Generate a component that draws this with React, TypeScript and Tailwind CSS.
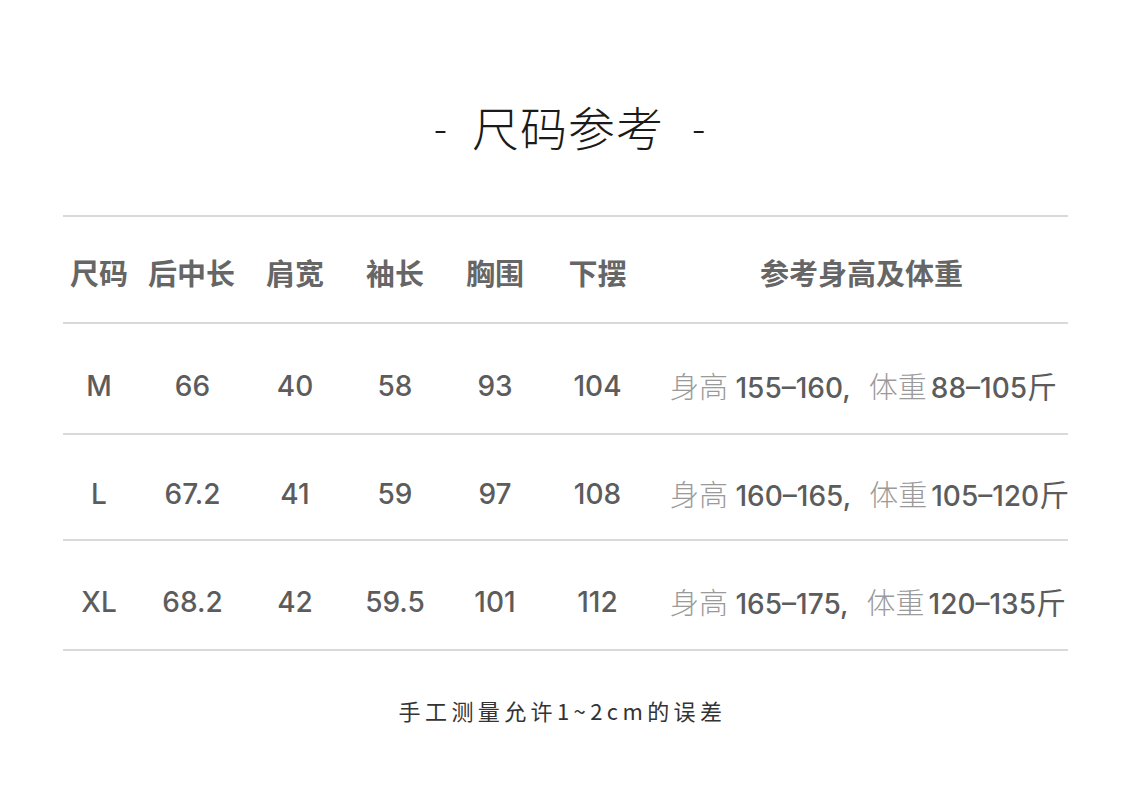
import React from "react";

const cjk = { fontFamily: '"Noto Sans CJK SC", sans-serif' };
const num = { fontFamily: 'Inter, "Noto Sans CJK SC", sans-serif' };

const rows = [
  { size: "M", len: "66", sh: "40", sl: "58", ch: "93", hem: "104", h: "155–160", w: "88–105", height: "h-[111px]" },
  { size: "L", len: "67.2", sh: "41", sl: "59", ch: "97", hem: "108", h: "160–165", w: "105–120", height: "h-[106px]" },
  { size: "XL", len: "68.2", sh: "42", sl: "59.5", ch: "101", hem: "112", h: "165–175", w: "120–135", height: "h-[110px]" },
];

const cols = "grid grid-cols-[72px_115px_90px_110px_90px_115px_413px] items-center";

export default function App() {
  return (
    <div className="w-[1125px] h-[789px] bg-white overflow-hidden">
      {/* title */}
      <div className="pt-[102px] pl-[14px] flex justify-center items-center text-[#1a1a1a] text-[47px] leading-none font-light" style={cjk}>
        <span className="mr-[25px] text-[40px]">-</span>
        <span className="tracking-[1px]">尺码参考</span>
        <span className="ml-[28px] text-[40px]">-</span>
      </div>

      <div className="ml-[63px] w-[1005px] mt-[66px] border-t-2 border-[#d9d9d9]">
        <div className={`${cols} h-[107px] pt-[6px] border-b-2 border-[#d9d9d9] text-[#666] text-[29px] font-bold text-center`} style={cjk}>
          <div>尺码</div>
          <div className="pr-[2px]">后中长</div>
          <div>肩宽</div>
          <div>袖长</div>
          <div>胸围</div>
          <div>下摆</div>
          <div>参考身高及体重</div>
        </div>

        {rows.map((r) => (
          <div key={r.size} className={`${cols} ${r.height} pt-[14px] border-b-2 border-[#d9d9d9] text-[#5c5c5c] text-[28px] font-medium text-center`} style={num}>
            <div>{r.size}</div>
            <div>{r.len}</div>
            <div>{r.sh}</div>
            <div>{r.sl}</div>
            <div>{r.ch}</div>
            <div>{r.hem}</div>
            <div className="text-left pl-[15px] whitespace-nowrap">
              <span className="text-[#9a9a9a] font-light text-[29px]" style={cjk}>身高</span>
              <span> {r.h},</span>
              <span className="ml-[18px] text-[#9a9a9a] font-light text-[29px]" style={cjk}>体重</span>
              <span className="ml-[4px]">{r.w}</span>
              <span className="text-[30px] font-normal" style={cjk}>斤</span>
            </div>
          </div>
        ))}
      </div>

      <div className="mt-[48px] flex justify-center">
        <span className="text-[#333] text-[22px] leading-none tracking-[4.4px]" style={cjk}>手工测量允许1~2cm的误差</span>
      </div>
    </div>
  );
}
